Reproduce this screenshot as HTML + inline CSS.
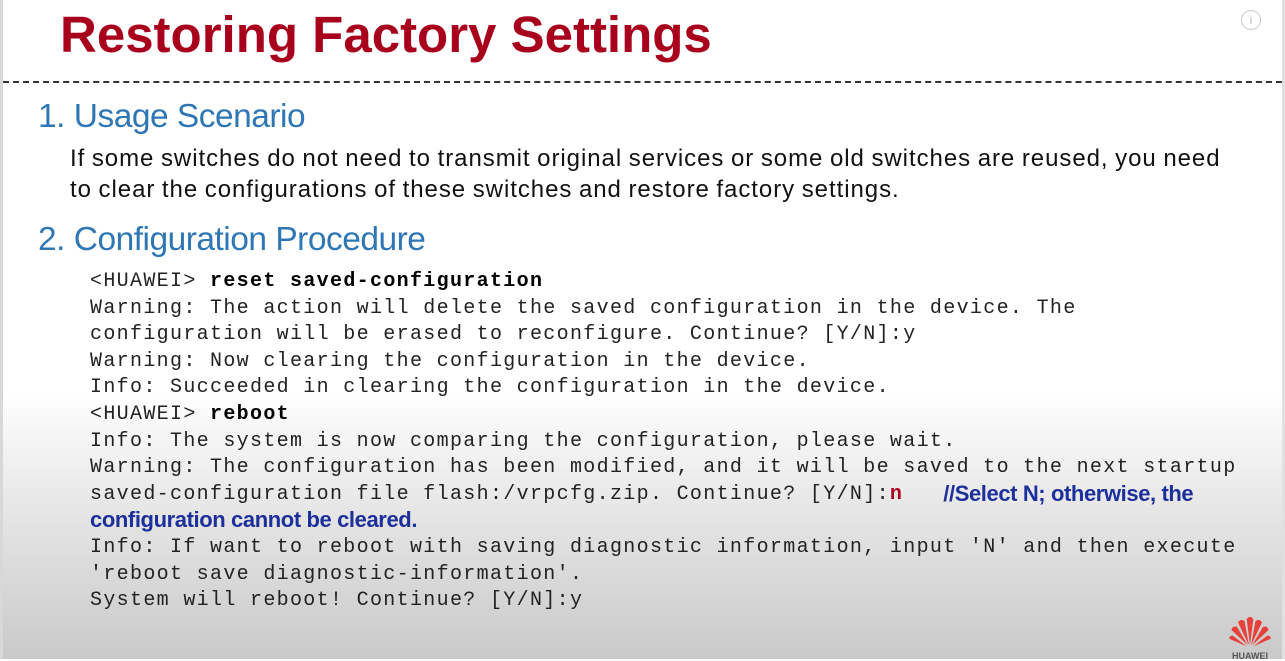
<!DOCTYPE html>
<html><head><meta charset="utf-8"><style>
html,body{margin:0;padding:0}
body{width:1285px;height:659px;overflow:hidden;position:relative;font-family:"Liberation Sans",sans-serif;
background:linear-gradient(#fff 0,#fff 390px,#e4e4e4 520px,#c9c9c9 659px);}
.lb{position:absolute;left:0;top:0;width:3px;height:659px;background:#d8d8d8}
.rb{position:absolute;right:0;top:0;width:3px;height:659px;background:#e0e0e0}
h1{position:absolute;left:60px;top:5px;margin:0;font-size:51px;font-weight:bold;color:#a8001c;letter-spacing:0px}
.dash{position:absolute;left:3px;right:3px;top:81px;border-top:2px dashed #333}
.h2{position:absolute;left:38px;font-size:33.5px;color:#2f76b5;letter-spacing:-0.5px}
.p{position:absolute;left:70px;font-size:24px;color:#111;line-height:31px;letter-spacing:0.95px;word-spacing:-1px}
pre{position:absolute;left:90px;top:269px;margin:0;font-family:"Liberation Mono",monospace;font-size:20px;letter-spacing:1.33px;line-height:26.6px;color:#222}
pre b{color:#000}
.n{color:#b00020;font-weight:bold}
.c{display:inline-block;height:26.6px;vertical-align:top;font-family:"Liberation Sans",sans-serif;font-weight:bold;color:#1c2f9a;font-size:22px;letter-spacing:-0.4px;line-height:24px}
.info{position:absolute;left:1241px;top:10px;width:18px;height:18px;border:1px solid #ccc;border-radius:50%;color:#bbb;font-size:12px;text-align:center;line-height:18px}
.logo{position:absolute;left:1226px;top:612px;width:48px}
.logo div{font-size:9px;font-weight:bold;color:#555;text-align:center;margin-top:-2px}
</style></head><body>
<div class="lb"></div><div class="rb"></div>
<h1>Restoring Factory Settings</h1>
<div class="info">i</div>
<div class="dash"></div>
<div class="h2" style="top:98px">1. Usage Scenario</div>
<div class="p" style="top:143px">If some switches do not need to transmit original services or some old switches are reused, you need<br>to clear the configurations of these switches and restore factory settings.</div>
<div class="h2" style="top:221px">2. Configuration Procedure</div>
<pre>&lt;HUAWEI&gt; <b>reset saved-configuration</b>
Warning: The action will delete the saved configuration in the device. The
configuration will be erased to reconfigure. Continue? [Y/N]:y
Warning: Now clearing the configuration in the device.
Info: Succeeded in clearing the configuration in the device.
&lt;HUAWEI&gt; <b>reboot</b>
Info: The system is now comparing the configuration, please wait.
Warning: The configuration has been modified, and it will be saved to the next startup
saved-configuration file flash:/vrpcfg.zip. Continue? [Y/N]:<span class="n">n</span>   <span class="c">//Select N; otherwise, the</span>
<span class="c">configuration cannot be cleared.</span>
Info: If want to reboot with saving diagnostic information, input 'N' and then execute
'reboot save diagnostic-information'.
System will reboot! Continue? [Y/N]:y</pre>
<div class="logo"><svg width="48" height="36" viewBox="0 0 44 32">
<g fill="#e8403a">
<path d="M22 30 L19 6 Q22 2 25 6 Z"/>
<path d="M21 30 L11 9 Q14 5 17 8 Z"/>
<path d="M23 30 L33 9 Q30 5 27 8 Z"/>
<path d="M20 30 L5 16 Q6 12 10 13 Z"/>
<path d="M24 30 L39 16 Q38 12 34 13 Z"/>
<path d="M19 31 L3 24 Q3 21 6 21 Z"/>
<path d="M25 31 L41 24 Q41 21 38 21 Z"/>
</g></svg><div>HUAWEI</div></div>
</body></html>
